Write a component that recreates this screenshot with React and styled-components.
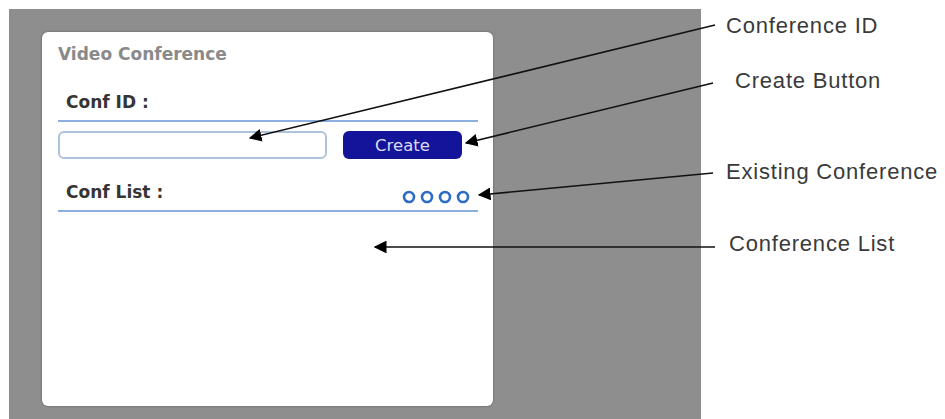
import React from 'react';
import styled, { createGlobalStyle } from 'styled-components';

const GlobalStyle = createGlobalStyle`
  html, body {
    margin: 0;
    padding: 0;
    background: #fff;
  }
`;

const Page = styled.div`
  position: relative;
  display: flex;
  width: 945px;
  height: 419px;
  overflow: hidden;
`;

const Stage = styled.div`
  flex: 0 0 692px;
  margin: 9px 0 0 9px;
  padding: 23px 0 0 33px;
  box-sizing: border-box;
  background: #8e8e8e;
`;

const Card = styled.div`
  width: 451px;
  height: 374px;
  box-sizing: border-box;
  padding: 12px 15px 0 16px;
  background: #fff;
  border-radius: 6px;
  box-shadow: 0 0 2px rgba(0, 0, 0, 0.45);
  font-family: "DejaVu Sans", Verdana, sans-serif;
`;

const Title = styled.div`
  font-size: 17px;
  line-height: 20px;
  font-weight: bold;
  color: #8a8a8a;
`;

const SectionHead = styled.div`
  display: flex;
  align-items: center;
  justify-content: space-between;
  margin-top: ${props => props.gap}px;
  padding: 0 8px;
  height: 20px;
`;

const Label = styled.div`
  font-size: 17px;
  line-height: 20px;
  font-weight: bold;
  color: #353535;
`;

const Rule = styled.div`
  height: 2px;
  margin-top: ${props => props.gap}px;
  background: #8cafe0;
`;

const Row = styled.div`
  display: flex;
  gap: 16px;
  margin-top: 9px;
`;

const IdInput = styled.input`
  width: 269px;
  height: 28px;
  box-sizing: border-box;
  border: 2px solid #aec2dc;
  border-radius: 6px;
  outline: none;
  background: #fff;
`;

const CreateButton = styled.button`
  width: 119px;
  height: 28px;
  border: none;
  border-radius: 6px;
  background: #14149a;
  color: #dcdcf2;
  font-family: "DejaVu Sans", Verdana, sans-serif;
  font-size: 16.5px;
  padding: 0;
`;

const Dots = styled.svg`
  display: block;
  margin-top: 9px;
`;

const Callouts = styled.div`
  display: flex;
  flex-direction: column;
  padding: 13px 0 0 25px;
`;

const Callout = styled.div`
  font-family: "Liberation Sans", Arial, sans-serif;
  font-size: 22px;
  line-height: 25px;
  letter-spacing: 0.8px;
  color: #3a3a3a;
  white-space: nowrap;
  margin-top: ${props => props.gap || 0}px;
  margin-left: ${props => props.indent || 0}px;
`;

const ArrowLayer = styled.svg`
  position: absolute;
  left: 0;
  top: 0;
  pointer-events: none;
`;

const arrows = [
  [715, 25, 250, 138],
  [713, 83, 466, 143],
  [713, 173, 479, 195],
  [715, 247, 375, 247],
];

export default function App() {
  return (
    <Page>
      <GlobalStyle />
      <Stage>
        <Card>
          <Title>Video Conference</Title>
          <SectionHead gap={28}>
            <Label>Conf ID :</Label>
          </SectionHead>
          <Rule gap={8} />
          <Row>
            <IdInput />
            <CreateButton>Create</CreateButton>
          </Row>
          <SectionHead gap={23}>
            <Label>Conf List :</Label>
            <Dots width="68" height="14" viewBox="0 0 68 14">
              {[0, 1, 2, 3].map(i => (
                <circle key={i} cx={7 + i * 18} cy="7" r="5" fill="#fff" stroke="#2c6cc2" strokeWidth="2.6" />
              ))}
            </Dots>
          </SectionHead>
          <Rule gap={8} />
        </Card>
      </Stage>
      <Callouts>
        <Callout>Conference ID</Callout>
        <Callout gap={30} indent={9}>Create Button</Callout>
        <Callout gap={66}>Existing Conference</Callout>
        <Callout gap={47} indent={3}>Conference List</Callout>
      </Callouts>
      <ArrowLayer width="945" height="419" viewBox="0 0 945 419">
        <defs>
          <marker id="head" viewBox="0 0 10 10" refX="9" refY="5" markerWidth="8" markerHeight="8" orient="auto">
            <path d="M0,0 L10,5 L0,10 z" fill="#000" />
          </marker>
        </defs>
        {arrows.map(([x1, y1, x2, y2], i) => (
          <line key={i} x1={x1} y1={y1} x2={x2} y2={y2} stroke="#111" strokeWidth="1.6" markerEnd="url(#head)" />
        ))}
      </ArrowLayer>
    </Page>
  );
}
